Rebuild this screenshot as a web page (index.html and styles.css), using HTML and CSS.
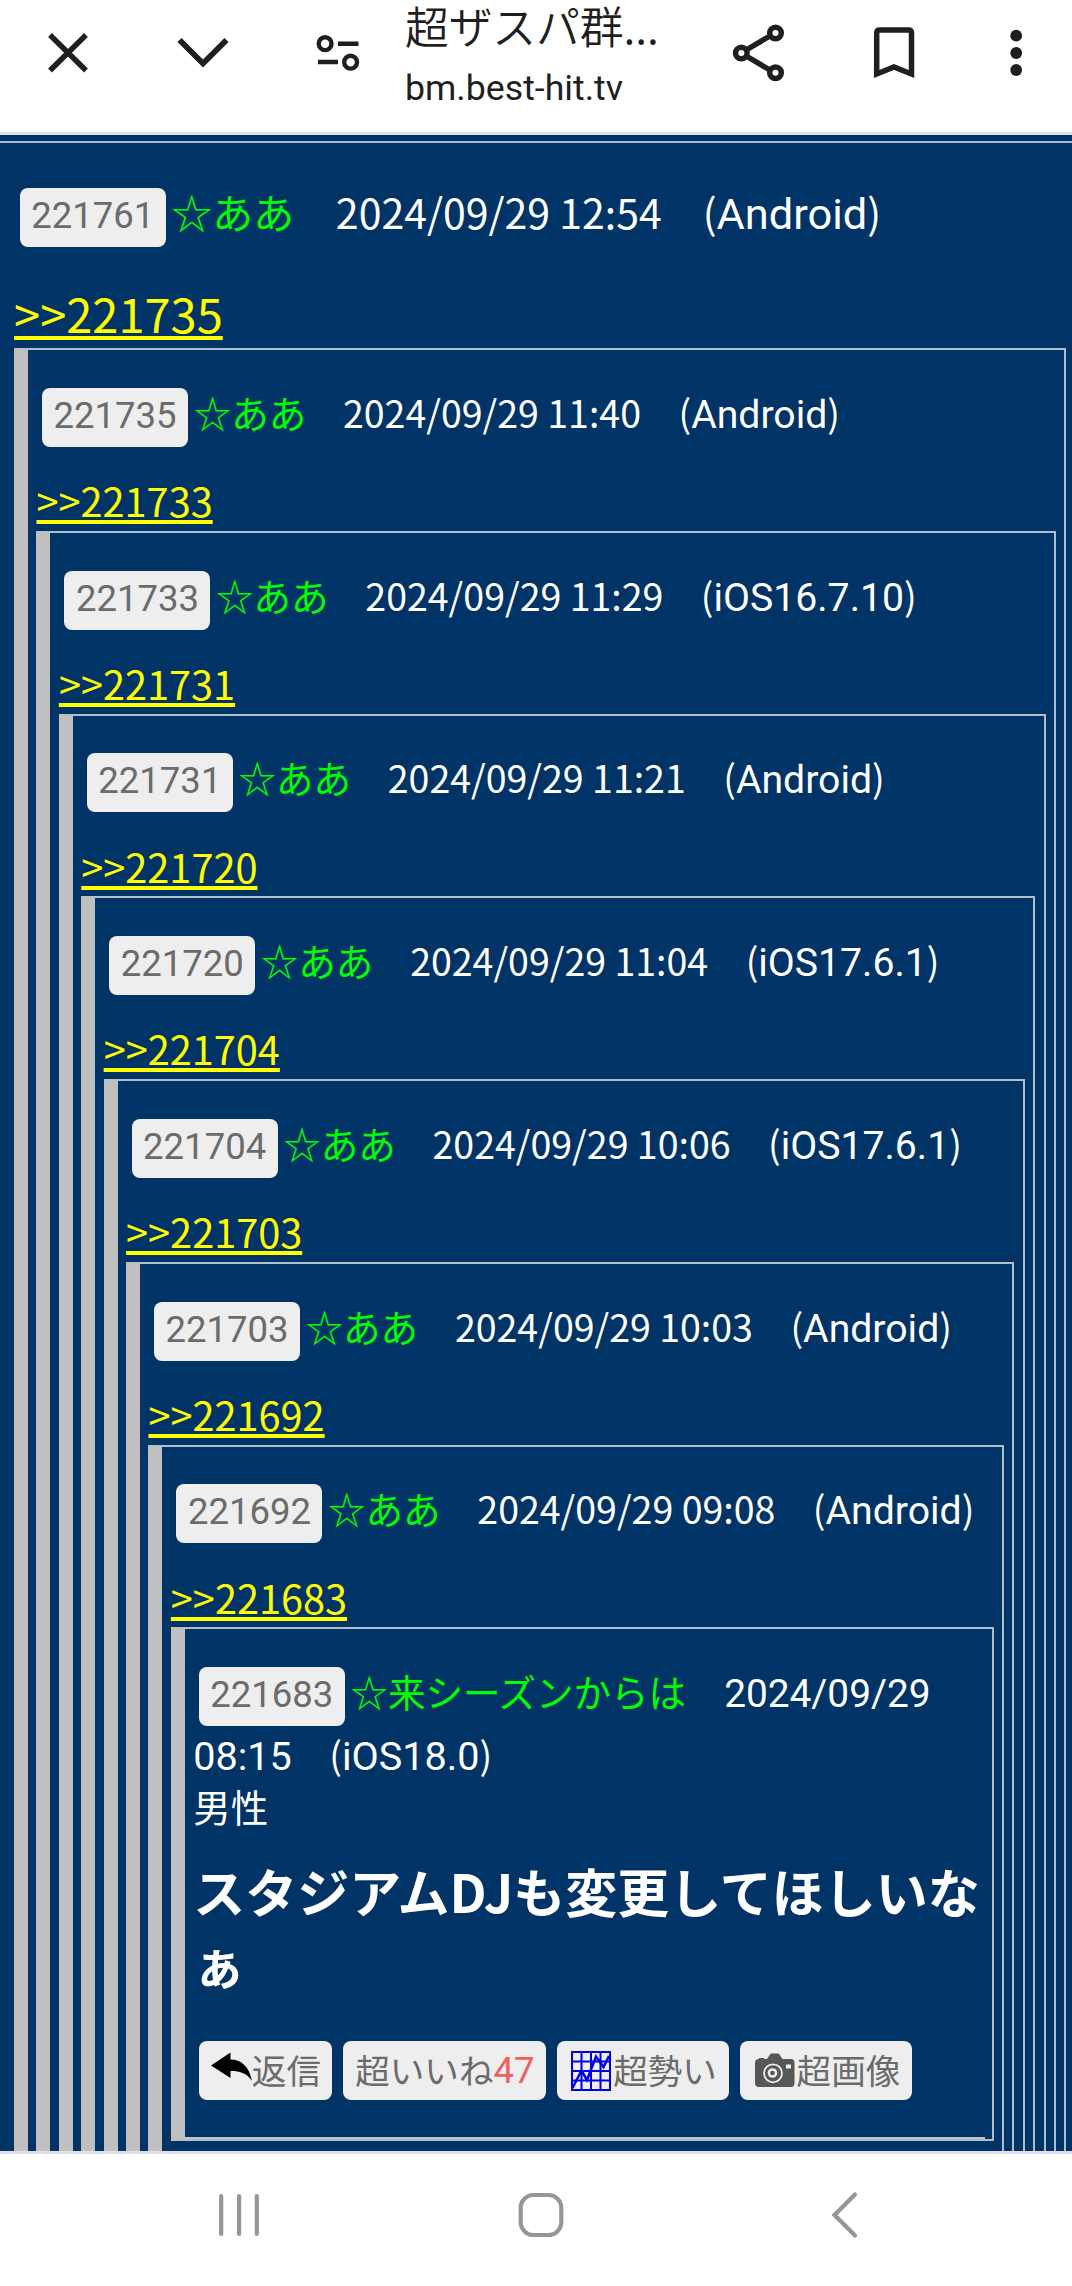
FILE: index.html
```html
<!DOCTYPE html>
<html lang="ja">
<head>
<meta charset="utf-8">
<title>超ザスパ群馬</title>
<link rel="stylesheet" href="styles.css">
</head>
<body>
<header class="toolbar">
  <svg class="tool-icons" width="390" height="106" viewBox="0 0 390 106" fill="none" stroke="#1f1f1f">
    <path d="M50 35 86 70.500M86 35 50 70.500" stroke-width="5.400"/>
    <path d="M179.500 40 203 63.500 226.500 40" stroke-width="5.800"/>
    <g stroke-width="4.400">
      <circle cx="325.100" cy="43.700" r="6.400"/><circle cx="350.600" cy="62.200" r="6.400"/>
      <path d="M338 43.700H358.500M318 62H338"/>
    </g>
  </svg>
  <div class="page-id">
    <div class="page-title">超ザスパ群...</div>
    <div class="page-host">bm.best-hit.tv</div>
  </div>
  <svg class="tool-icons" width="342" height="106" viewBox="730 0 342 106" fill="none" stroke="#1f1f1f">
    <g stroke-width="5.500">
      <path d="M769 36.500 747 49.500M747 56.500 769 69.500"/>
      <circle cx="775.500" cy="33" r="5.800"/><circle cx="741.300" cy="53" r="5.800"/><circle cx="775.500" cy="72.700" r="5.800"/>
      <path d="M876.700 74V33q0-3 3-3H908.500q3 0 3 3V74L894 67Z"/>
    </g>
    <g fill="#1f1f1f" stroke="none"><circle cx="1016.200" cy="35.700" r="5.900"/><circle cx="1016.200" cy="53" r="5.900"/><circle cx="1016.200" cy="70" r="5.900"/></g>
  </svg>
</header>

<main class="thread">
  <div class="rule"></div>
  <div class="root">
    <div class="head head-root"><span class="badge">221761</span><span class="name">☆ああ</span>　2024/09/29 12:54　(<span class="latin">Android</span>)</div>
    <a class="ref ref-root">&gt;&gt;221735</a>
    <div class="quote">
      <div class="head"><span class="badge">221735</span><span class="name">☆ああ</span>　2024/09/29 11:40　(<span class="latin">Android</span>)</div>
      <a class="ref">&gt;&gt;221733</a>
      <div class="quote">
        <div class="head"><span class="badge">221733</span><span class="name">☆ああ</span>　2024/09/29 11:29　(<span class="latin">iOS16.7.10</span>)</div>
        <a class="ref">&gt;&gt;221731</a>
        <div class="quote">
          <div class="head"><span class="badge">221731</span><span class="name">☆ああ</span>　2024/09/29 11:21　(<span class="latin">Android</span>)</div>
          <a class="ref">&gt;&gt;221720</a>
          <div class="quote">
            <div class="head"><span class="badge">221720</span><span class="name">☆ああ</span>　2024/09/29 11:04　(<span class="latin">iOS17.6.1</span>)</div>
            <a class="ref">&gt;&gt;221704</a>
            <div class="quote">
              <div class="head"><span class="badge">221704</span><span class="name">☆ああ</span>　2024/09/29 10:06　(<span class="latin">iOS17.6.1</span>)</div>
              <a class="ref">&gt;&gt;221703</a>
              <div class="quote">
                <div class="head"><span class="badge">221703</span><span class="name">☆ああ</span>　2024/09/29 10:03　(<span class="latin">Android</span>)</div>
                <a class="ref">&gt;&gt;221692</a>
                <div class="quote">
                  <div class="head"><span class="badge">221692</span><span class="name">☆ああ</span>　2024/09/29 09:08　(<span class="latin">Android</span>)</div>
                  <a class="ref">&gt;&gt;221683</a>
                  <div class="quote quote-last">
                    <div class="head head-last"><span class="badge">221683</span><span class="name">☆来シーズンからは</span>　<span class="latin date">2024/09/29</span><br><span class="latin">08:15</span>　(<span class="latin">iOS18.0</span>)<br>男性</div>
                    <div class="message">スタジアムDJも変更してほしいなぁ</div>
                    <div class="actions">
                      <span class="action"><svg width="41" height="40" viewBox="0 0 41 40"><path d="M0 14.500 19.500 1.500V8.500C30 8.500 38 15 41 30 36 22.500 30 20 19.500 20V27Z"/></svg>返信</span>
                      <span class="action">超いいね<span class="count">47</span></span>
                      <span class="action action-icon"><svg width="42" height="40" viewBox="0 0 42 40" fill="none" stroke="#0000e6" stroke-width="2"><path d="M1 1H39V39H1ZM10.500 1V39M20 1V39M29.500 1V39M1 10.500H39M1 20H39M1 29.500H39"/><path d="M1.500 37 10.500 19.500 16 29 25 5.500 32.500 16 38 5" stroke-width="2.500"/></svg>超勢い</span>
                      <span class="action action-icon"><svg width="42" height="40" viewBox="0 0 42 40"><path fill="#575757" d="M4 8V7H9V8H12L15 3.500Q15.500 2.500 16.500 2.500H23Q24 2.500 24.500 3.500L27.500 8H36Q39.500 8 39.500 12V32Q39.500 36 36 36H4Q0 36 0 32V12Q0 8 4 8Z"/><circle cx="18" cy="22.300" r="9" fill="none" stroke="#eee" stroke-width="1.800"/><circle cx="17.500" cy="22" r="3.600" fill="none" stroke="#eee" stroke-width="2.500"/><path d="M31 13.500H36V17.500H31Z" fill="#eee"/></svg>超画像</span>
                    </div>
                    <div class="end-rule"></div>
                  </div>
                </div>
              </div>
            </div>
          </div>
        </div>
      </div>
    </div>
  </div>
</main>

<nav class="system-nav">
  <svg width="1072" height="132" viewBox="0 2154 1072 132" fill="none" stroke="#969696" stroke-width="4.200" stroke-linecap="round">
    <path d="M221.200 2196V2234M239.100 2196V2234M256.800 2196V2234"/>
    <rect x="520.700" y="2195" width="40.600" height="40" rx="13"/>
    <path d="M855 2194.500 834.500 2215 855 2235.500"/>
  </svg>
</nav>
</body>
</html>
```
FILE: styles.css
```css
body {
  margin: 0;
  width: 1072px;
  height: 2286px;
  overflow: hidden;
  background: #fff;
  font-family: "Noto Sans CJK JP", sans-serif;
}
svg { display: block; flex: none; }

.toolbar {
  display: flex;
  height: 132px;
  border-bottom: 3px solid #dbe3e2;
}
.page-id {
  box-sizing: border-box;
  width: 340px;
  padding-left: 15px;
  color: #1f1f1f;
  white-space: nowrap;
}
.page-title {
  height: 63px;
  line-height: 50px;
  font-size: 43.800px;
  font-weight: 350;
}
.page-host {
  font: 35.700px/50px Roboto, sans-serif;
}

.thread {
  box-sizing: border-box;
  height: 2016px;
  padding-top: 6px;
  overflow: hidden;
  background: #003366;
  color: #fff;
}
.rule { height: 2px; background: #a9bcd8; }
.root { padding: 0 5.700px 0 14.100px; }

.head {
  margin-bottom: 20.200px;
  padding-top: 35.850px;
  font-size: 37.500px;
  line-height: 52px;
  white-space: nowrap;
}
.head-root {
  margin-bottom: 29px;
  padding-top: 42px;
  font-size: 41px;
}
.badge {
  display: inline-block;
  box-sizing: border-box;
  width: 146px;
  height: 59px;
  margin: 0 5.600px 2px;
  padding-bottom: 3px;
  border-radius: 8px;
  background: #eee;
  color: #6b6b6b;
  font: 36.500px/56px Roboto, sans-serif;
  text-align: center;
}
.head-root .badge { margin-bottom: 1px; vertical-align: 1px; }
.name { margin-right: -0.700px; color: #0f0; }
.head-root .name, .head-last .name { margin-right: 0.600px; }
.latin { font: 1.045em/1 Roboto, sans-serif; }
.head-root .latin { font-size: 43.400px; }
.head-last .latin { font-size: 39.600px; }
.head-last .date { font-size: 38.800px; }

.ref {
  display: block;
  width: max-content;
  height: 61.700px;
  color: #ff0;
  font-size: 39.700px;
  line-height: 62.700px;
  text-decoration: underline;
  text-decoration-thickness: 4px;
  text-underline-offset: 3px;
  text-decoration-skip-ink: none;
}
.ref-root { font-size: 47px; height: 71.200px; line-height: 71px; }

.quote {
  padding: 0 8.400px 60px;
  border: 2px solid #afbecb;
  border-left: 14px solid #c0c0c0;
}
.quote-last { padding-bottom: 0; }
.head-last { margin-bottom: 22px; }
.message {
  margin-bottom: 41px;
  font-size: 52px;
  font-weight: 700;
  line-height: 73px;
}
.actions { display: flex; gap: 11.200px; margin-left: 5.600px; }
.action {
  display: flex;
  box-sizing: border-box;
  height: 59px;
  padding: 10px 11px 0 12px;
  border-radius: 8px;
  background: #eee;
  color: #6b6b6b;
  font-size: 34.600px;
  line-height: 36px;
  white-space: nowrap;
}
.action-icon { padding: 10px 12px 0 14.500px; }
.count { color: #f0605c; font-family: Roboto, sans-serif; font-size: 36.500px; line-height: 39px; }
.end-rule { height: 2px; margin: 37px -2px 0 -8.400px; background: #bcc3cc; }

.system-nav { height: 132px; border-top: 3px solid #e1e0e8; background: #fff; }
```
